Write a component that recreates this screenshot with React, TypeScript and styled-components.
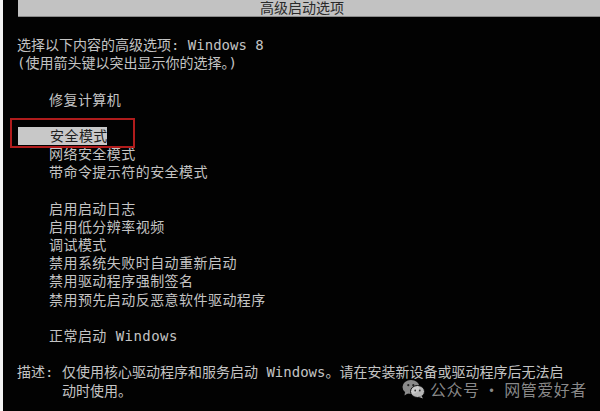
import React from "react";
import styled, { createGlobalStyle } from "styled-components";

const Global = createGlobalStyle`
  html, body { margin: 0; padding: 0; background: #000; }
  body { width: 600px; height: 411px; overflow: hidden; }
`;

const Screen = styled.div`
  display: flex;
  width: 600px;
  height: 411px;
  background: #020202;
  position: relative;
  overflow: hidden;
  font-family: "DejaVu Sans Mono", "Noto Sans CJK SC", monospace;
  color: #c4c4c4;
`;

const Edge = styled.div`
  width: 3px;
  flex: none;
  background: #f4f4f4;
`;

const Main = styled.div`
  flex: 1;
  display: flex;
  flex-direction: column;
`;

const TitleBar = styled.div`
  margin-left: 15px;
  height: 16px;
  background: #c2c2c2;
  border-bottom: 1px solid #8a8a8a;
  display: flex;
  align-items: center;
  justify-content: center;
  padding-right: 14px;
  font-size: 14px;
  line-height: 16px;
  color: #2a2a2a;
`;

const Body = styled.div`
  display: flex;
  flex-direction: column;
  padding: 19px 0 0 14px;
  font-size: 14px;
  line-height: 18.2px;
`;

const Line = styled.div<{ $indent?: number; $spacing?: number }>`
  height: 18.2px;
  padding-left: ${(p) => p.$indent ?? 0}px;
  letter-spacing: ${(p) => p.$spacing ?? 0}px;
  white-space: pre;
`;

const Item = styled(Line)`
  padding-left: 32px;
  letter-spacing: 0.45px;
`;

const Selected = styled.div`
  position: relative;
  height: 18.2px;
  margin-left: 1px;
  width: 89px;
  box-sizing: border-box;
  padding-left: 32px;
  background: #c8c8c8;
  color: #1e1e1e;
  letter-spacing: 0.45px;
  white-space: pre;
`;

const RedBox = styled.div`
  position: absolute;
  left: -8px;
  top: -9px;
  width: 125px;
  height: 30px;
  box-sizing: border-box;
  border: 2px solid #b01c1c;
`;

const Desc = styled.div`
  display: grid;
  grid-template-columns: 45px auto;
`;

const DescText = styled.div`
  display: flex;
  flex-direction: column;
  letter-spacing: 0.3px;
`;

const Watermark = styled.div`
  position: absolute;
  left: 402px;
  top: 379px;
  display: flex;
  align-items: center;
  gap: 5px;
  font-family: "Noto Sans CJK SC", sans-serif;
  font-size: 16px;
  line-height: 18px;
  letter-spacing: 0.5px;
  color: rgba(190, 190, 190, 0.72);
`;

const WeChat = () => (
  <svg width="23" height="20" viewBox="0 0 23 20">
    <ellipse cx="9" cy="8" rx="8.5" ry="7" fill="rgba(190,190,190,0.72)" />
    <path d="M3 13 L2.5 16.5 L6.5 14 Z" fill="rgba(190,190,190,0.72)" />
    <ellipse cx="15.5" cy="12.5" rx="7" ry="6" fill="rgba(215,215,215,0.85)" stroke="#111" strokeWidth="1" />
    <path d="M19.5 17 L21 19.5 L17 18 Z" fill="rgba(215,215,215,0.85)" />
    <circle cx="6.3" cy="6.2" r="1.1" fill="#222" />
    <circle cx="11.3" cy="6.2" r="1.1" fill="#222" />
    <circle cx="13.2" cy="11.5" r="0.9" fill="#333" />
    <circle cx="17.8" cy="11.5" r="0.9" fill="#333" />
  </svg>
);

export default function App() {
  return (
    <>
      <Global />
      <Screen>
        <Edge />
        <Main>
          <TitleBar>高级启动选项</TitleBar>
          <Body>
            <Line>选择以下内容的高级选项: Windows 8</Line>
            <Line>(使用箭头键以突出显示你的选择。)</Line>
            <Line />
            <Item>修复计算机</Item>
            <Line />
            <Selected>
              安全模式
              <RedBox />
            </Selected>
            <Item>网络安全模式</Item>
            <Item>带命令提示符的安全模式</Item>
            <Line />
            <Item>启用启动日志</Item>
            <Item>启用低分辨率视频</Item>
            <Item>调试模式</Item>
            <Item>禁用系统失败时自动重新启动</Item>
            <Item>禁用驱动程序强制签名</Item>
            <Item>禁用预先启动反恶意软件驱动程序</Item>
            <Line />
            <Item>正常启动 Windows</Item>
            <Line />
            <Desc>
              <Line>描述:</Line>
              <DescText>
                <Line>仅使用核心驱动程序和服务启动 Windows。请在安装新设备或驱动程序后无法启</Line>
                <Line>动时使用。</Line>
              </DescText>
            </Desc>
          </Body>
        </Main>
        <Watermark>
          <WeChat />
          <span>公众号 · 网管爱好者</span>
        </Watermark>
      </Screen>
    </>
  );
}
